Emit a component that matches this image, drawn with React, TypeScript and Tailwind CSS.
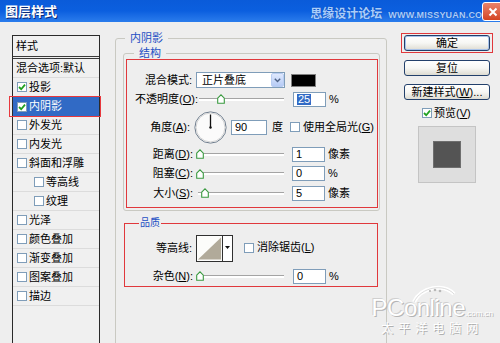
import React from "react";

const FONT = "font-['Liberation_Sans','Noto_Sans_CJK_SC',sans-serif]";

interface StyleItem {
  label: string;
  box?: boolean;
  checked?: boolean;
  selected?: boolean;
  indent?: boolean;
}

const STYLE_ITEMS: StyleItem[] = [
  { label: "混合选项:默认", box: false },
  { label: "投影", box: true, checked: true },
  { label: "内阴影", box: true, checked: true, selected: true },
  { label: "外发光", box: true },
  { label: "内发光", box: true },
  { label: "斜面和浮雕", box: true },
  { label: "等高线", box: true, indent: true },
  { label: "纹理", box: true, indent: true },
  { label: "光泽", box: true },
  { label: "颜色叠加", box: true },
  { label: "渐变叠加", box: true },
  { label: "图案叠加", box: true },
  { label: "描边", box: true },
];

function Check({ checked }: { checked?: boolean }) {
  return (
    <span className="flex h-[10px] w-[10px] shrink-0 items-center justify-center border border-[#7f9db9] bg-white">
      {checked && (
        <svg width="8" height="8" viewBox="0 0 8 8">
          <path d="M1 4 L3.2 6.2 L7 1.6" fill="none" stroke="#21a121" strokeWidth="1.8" />
        </svg>
      )}
    </span>
  );
}

function Mn({ children }: { children: React.ReactNode }) {
  return <span className="underline underline-offset-1">{children}</span>;
}

function Slider({ width, thumb }: { width: number; thumb: number }) {
  return (
    <div className="relative flex h-[12px] items-center" style={{ width }}>
      <div className="h-[3px] w-full border-t border-[#a4a4a4] bg-white" />
      <svg className="absolute top-[1px]" style={{ left: thumb - 4 }} width="8" height="10" viewBox="0 0 8 10">
        <path d="M0.7 4.2 L4 0.8 L7.3 4.2 L7.3 9.3 L0.7 9.3 Z" fill="white" stroke="#3a9a40" strokeWidth="1.1" />
      </svg>
    </div>
  );
}

function Field({ value, highlight, width = 33 }: { value: string; highlight?: boolean; width?: number }) {
  return (
    <div className="flex h-[15px] items-center border border-[#7f9db9] bg-white pl-[3px] text-[11px] leading-none" style={{ width }}>
      {highlight ? <span className="bg-[#316ac5] px-px text-white">{value}</span> : <span>{value}</span>}
    </div>
  );
}

function XPButton({ children, primary }: { children: React.ReactNode; primary?: boolean }) {
  return (
    <div
      className={
        primary
          ? "flex h-[16px] w-[86px] items-center justify-center rounded-[3px] border border-[#23406b] bg-gradient-to-b from-white via-[#f7f7f4] to-[#dedcd2] text-[11px] leading-none shadow-[inset_0_0_0_1px_#a9c3ea]"
          : "flex h-[16px] w-[86px] items-center justify-center rounded-[3px] border border-[#23406b] bg-gradient-to-b from-white via-[#f7f7f4] to-[#dedcd2] text-[11px] leading-none"
      }
    >
      {children}
    </div>
  );
}

function Dial() {
  return (
    <svg width="33" height="33" viewBox="0 0 33 33">
      <circle cx="16.5" cy="16.5" r="15.6" fill="#fbfbfb" stroke="#6d7c8c" strokeWidth="1" />
      <circle cx="16.5" cy="16.5" r="14.4" fill="none" stroke="#d6d6d6" strokeWidth="1" />
      <line x1="16.5" y1="16.5" x2="16.5" y2="3.5" stroke="#111" strokeWidth="1.3" />
      <circle cx="16.5" cy="16.5" r="1.2" fill="#111" />
    </svg>
  );
}

function StyleList() {
  return (
    <div className="mt-[13px] h-[330px] w-[88px] shrink-0 border border-[#2a2a2a] bg-[#f0f0f0] text-[11px]">
      <div className="flex h-[23px] items-center border-b-[3px] border-double border-[#3a3a3a] pl-[3px]">样式</div>
      {STYLE_ITEMS.map((item) => (
        <div
          key={item.label}
          className={
            item.selected
              ? "relative flex h-[19px] items-center gap-[2px] bg-[#316ac5] pl-[4px] text-white"
              : "relative flex h-[19px] items-center gap-[2px] border-b border-[#dcdcdc] pl-[4px]"
          }
        >
          {item.indent && <span className="w-[15px] shrink-0" />}
          {item.box && <Check checked={item.checked} />}
          <span className={item.box ? "" : "-ml-px"}>{item.label}</span>
          {item.selected && <div className="absolute -left-[4px] -right-[2px] -top-px bottom-[-1px] border border-[#e8383d]" />}
        </div>
      ))}
    </div>
  );
}

function Structure() {
  return (
    <fieldset className="ml-[7px] mr-[6px] mt-[3px] rounded-[3px] border border-[#c9c9c2]">
      <legend className="ml-[10px] px-[5px] text-[11px] leading-[12px] text-[#2450c4]">结构</legend>
      <div className="mb-[2px] ml-[2px] mr-[1px] flex flex-col border border-[#e0383c] pb-[4px] pt-[12px] text-[11px]">
        <div className="flex h-[16px] items-center">
          <span className="w-[65px] text-right">混合模式:</span>
          <div className="ml-[4px] flex h-[16px] w-[89px] items-center justify-between border border-[#7f9db9] bg-white pl-[5px]">
            <span>正片叠底</span>
            <span className="flex h-[14px] w-[13px] items-center justify-center rounded-[2px] border border-[#b9cdf2] bg-gradient-to-b from-[#dfe9fd] to-[#b6cbf5]">
              <svg width="7" height="5" viewBox="0 0 7 5">
                <path d="M0.8 0.8 L3.5 3.6 L6.2 0.8" fill="none" stroke="#4d6185" strokeWidth="1.4" />
              </svg>
            </span>
          </div>
          <div className="ml-[6px] h-[13px] w-[25px] border border-[#808080] bg-black" />
        </div>
        <div className="flex h-[22px] items-center">
          <span className="w-[71px] text-right">
            不透明度(<Mn>O</Mn>):
          </span>
          <div className="ml-[1px]">
            <Slider width={85} thumb={22} />
          </div>
          <div className="ml-[9px]">
            <Field value="25" highlight />
          </div>
          <span className="ml-[3px]">%</span>
        </div>
        <div className="flex h-[34px] items-center">
          <span className="w-[63px] text-right">
            角度(<Mn>A</Mn>):
          </span>
          <div className="ml-[4px] flex">
            <Dial />
          </div>
          <div className="ml-[4px]">
            <Field value="90" width={36} />
          </div>
          <span className="ml-[5px]">度</span>
          <div className="ml-[7px] flex items-center gap-[3px]">
            <Check />
            <span>
              使用全局光(<Mn>G</Mn>)
            </span>
          </div>
        </div>
        {[
          { label: "距离", key: "D", value: "1", unit: "像素", thumb: 2, h: "h-[20px]" },
          { label: "阻塞", key: "C", value: "0", unit: "%", thumb: 2, h: "h-[19px]" },
          { label: "大小", key: "S", value: "5", unit: "像素", thumb: 7, h: "h-[20px]" },
        ].map((row) => (
          <div key={row.label} className={`flex items-center text-black ${row.h}`}>
            <span className="w-[66px] text-right">
              {row.label}(<Mn>{row.key}</Mn>):
            </span>
            <div className="ml-[5px]">
              <Slider width={86} thumb={row.thumb} />
            </div>
            <div className="ml-[8px]">
              <Field value={row.value} />
            </div>
            <span className="ml-[3px]">{row.unit}</span>
          </div>
        ))}
      </div>
    </fieldset>
  );
}

function Quality() {
  return (
    <fieldset className="ml-[8px] mr-[8px] mt-[6px] border border-[#e0383c] pb-[1px] text-[11px]">
      <legend className="ml-[14px] px-px text-[10px] leading-[12px] text-[#2450c4]">品质</legend>
      <div className="mt-[6px] flex h-[27px] items-center">
        <span className="w-[67px] text-right">等高线:</span>
        <div className="ml-[4px] flex h-[27px] border border-[#303030] bg-white">
          <svg width="26" height="25" viewBox="0 0 26 25" className="border-r border-[#303030]">
            <rect x="0" y="0" width="26" height="25" fill="#fcfcfa" />
            <path d="M1 24 L25 1 L25 24 Z" fill="#b1aa9a" />
          </svg>
          <div className="flex w-[9px] items-start justify-center pt-[10px]">
            <svg width="5" height="3" viewBox="0 0 5 3">
              <path d="M0 0 L5 0 L2.5 3 Z" fill="#111" />
            </svg>
          </div>
        </div>
        <div className="ml-[11px] flex items-center gap-[3px] pb-[2px]">
          <Check />
          <span>
            消除锯齿(<Mn>L</Mn>)
          </span>
        </div>
      </div>
      <div className="mt-[5px] flex h-[18px] items-center">
        <span className="w-[68px] text-right">
          杂色(<Mn>N</Mn>):
        </span>
        <div className="ml-[5px]">
          <Slider width={86} thumb={2} />
        </div>
        <div className="ml-[9px]">
          <Field value="0" />
        </div>
        <span className="ml-[3px]">%</span>
      </div>
    </fieldset>
  );
}

function SideButtons() {
  return (
    <div className="ml-[14px] mt-[11px] flex w-[92px] shrink-0 flex-col text-[11px]">
      <div className="w-[92px] border border-[#e0383c] px-[2px] py-px">
        <XPButton primary>确定</XPButton>
      </div>
      <div className="ml-[3px] mt-[7px]">
        <XPButton>复位</XPButton>
      </div>
      <div className="ml-[3px] mt-[8px]">
        <XPButton>
          新建样式(<Mn>W</Mn>)...
        </XPButton>
      </div>
      <div className="ml-[21px] mt-[4px] flex h-[18px] items-center gap-[2px]">
        <Check checked />
        <span>
          预览(<Mn>V</Mn>)
        </span>
      </div>
      <div className="ml-[17px] mt-[4px] flex h-[57px] w-[58px] items-center justify-center border border-[#c4c4c4] bg-[#dedede]">
        <div className="h-[27px] w-[28px] border border-[#6e6e6e] bg-[#545454]" />
      </div>
    </div>
  );
}

export default function App() {
  return (
    <div className={`relative h-[343px] w-[500px] overflow-hidden bg-[#eeeeee] text-black ${FONT}`}>
      <div className="relative flex h-[22px] items-center bg-gradient-to-b from-[#0a5bd9] via-[#0b5fdf] to-[#2a7cec] pl-[5px]">
        <span className="text-[13px] font-bold leading-none text-white [text-shadow:1px_1px_0_#0a2a78]">图层样式</span>
        <span className="ml-auto mt-[6px] text-[12px] font-bold leading-none text-[#a9cdfa] [text-shadow:0_0_1px_#0b3fa8]">思缘设计论坛</span>
        <span className="ml-[6px] mr-[10px] mt-[8px] text-[9px] font-bold leading-none tracking-[0.2px] text-[#a9cdfa] [text-shadow:0_0_1px_#0b3fa8]">
          WWW.MISSYUAN.COM
        </span>
        <div className="absolute right-[-3px] top-[2px] flex h-[19px] w-[21px] items-center justify-center rounded-[3px] border border-white bg-gradient-to-b from-[#e9826a] to-[#d4431f]">
          <svg width="10" height="10" viewBox="0 0 10 10">
            <path d="M1.5 1.5 L8.5 8.5 M8.5 1.5 L1.5 8.5" stroke="white" strokeWidth="2" />
          </svg>
        </div>
      </div>

      <div className="flex pl-[12px]">
        <StyleList />
        <fieldset className="ml-[15px] mt-[10px] h-[340px] w-[272px] shrink-0 rounded-[3px] border border-[#c9c9c2]">
          <legend className="ml-[9px] px-[5px] text-[11px] leading-[12px] text-[#2450c4]">内阴影</legend>
          <Structure />
          <Quality />
        </fieldset>
        <SideButtons />
      </div>

      <div className="pointer-events-none absolute bottom-[7px] right-[7px] flex flex-col items-center">
        <svg width="46" height="20" viewBox="0 0 46 20" className="-mb-[10px] ml-[4px]">
          <path d="M3 18 C 10 3, 33 -1, 43 10" fill="none" stroke="#ffffff" strokeWidth="4" />
          <path d="M3 18 C 10 3, 33 -1, 43 10" fill="none" stroke="#c4c4c4" strokeWidth="0.6" />
          <circle cx="24" cy="6" r="1.3" fill="#b8b8b8" />
          <circle cx="29" cy="7" r="1.3" fill="#b8b8b8" />
          <circle cx="19" cy="7" r="1.1" fill="#b8b8b8" />
        </svg>
        <div className="flex items-baseline">
          <span className="font-['Liberation_Sans',sans-serif] text-[24px] leading-[28px] tracking-[-0.5px] text-white [text-shadow:1px_1px_0_#b4b4b4,-1px_-1px_0_#d0d0d0]">PConline</span>
          <span className="text-[8px] leading-[10px] text-white [text-shadow:1px_1px_0_#b0b0b0]">.com.cn</span>
        </div>
        <span className="text-[12px] leading-[14px] tracking-[5px] text-white [text-shadow:1px_1px_0_#b0b0b0]">太平洋电脑网</span>
      </div>
    </div>
  );
}
